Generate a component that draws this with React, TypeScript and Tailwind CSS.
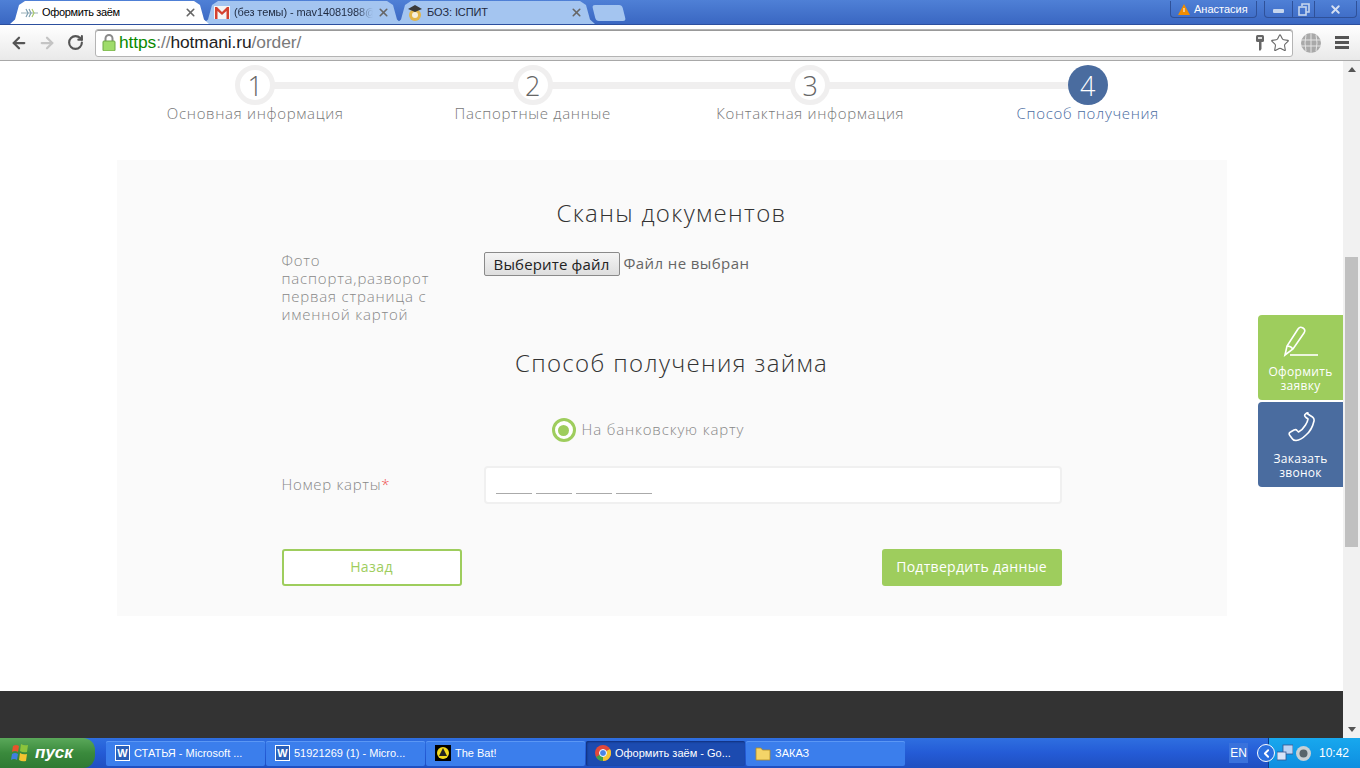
import { ArrowLeft, ArrowRight, RotateCw, Star, X, ChevronLeft } from 'lucide-react'

const ui = "font-['Liberation_Sans',sans-serif]"
const site = "font-['Open_Sans',sans-serif]"

const steps = ['Основная информация', 'Паспортные данные', 'Контактная информация', 'Способ получения']

function Favicon() {
  return (
    <svg width="17" height="10" viewBox="0 0 17 10" className="shrink-0">
      <path d="M0 5h17" stroke="#9ab0b8" strokeWidth="1.2" />
      <path d="M5 1l2 4-2 4M8 1l2 4-2 4" stroke="#7f9fb0" strokeWidth="1.2" fill="none" />
      <path d="M11 1l2 4-2 4" stroke="#a8c868" strokeWidth="1.2" fill="none" />
    </svg>
  )
}

function GmailIcon() {
  return (
    <svg width="16" height="13" viewBox="0 0 16 13" className="shrink-0">
      <rect width="16" height="13" fill="#f4f4f4" />
      <path d="M1 13V1h2l5 5 5-5h2v12h-2.500V5L8 9 3.500 5v8z" fill="#d4412f" />
    </svg>
  )
}

function GradIcon() {
  return (
    <svg width="16" height="18" viewBox="0 0 16 18" className="shrink-0">
      <circle cx="8" cy="11" r="6" fill="#e2b64a" />
      <circle cx="8" cy="11" r="3" fill="#f6efdc" />
      <path d="M1 5l7-4 7 4-7 3z" fill="#3a3a3a" />
    </svg>
  )
}

function Tab({ title, icon, active, faded }: { title: string; icon: React.ReactNode; active?: boolean; faded?: boolean }) {
  return (
    <div
      className={`-mr-[6px] flex h-full w-[199px] shrink-0 items-center gap-1 pl-[11px] pr-[12px] [clip-path:polygon(0_100%,5px_80%,9px_4px,15px_0,184px_0,190px_4px,194px_80%,199px_100%)] ${
        active ? 'z-10 bg-white text-black' : 'bg-[#a4c5f0] text-[#1f2a40]'
      }`}
    >
      {icon}
      <span className={`${ui} min-w-0 flex-1 overflow-hidden whitespace-nowrap text-[11px] ${active ? 'tracking-[-0.35px]' : 'tracking-[-0.1px]'} ${faded ? '[mask-image:linear-gradient(90deg,#000_88%,transparent)]' : ''}`}>
        {title}
      </span>
      <X size={13} strokeWidth={3} className="shrink-0 text-[#666]" />
    </div>
  )
}

function Chrome() {
  return (
    <div className="flex h-[61px] shrink-0 flex-col border-b border-[#a8a8a8]">
      <div className="flex h-[25px] shrink-0 border-b border-[#2c4f9e] bg-gradient-to-b from-[#4f80d6] to-[#3a67c2] pl-[10px] pt-[1px]">
        <Tab active title="Оформить заём" icon={<Favicon />} />
        <Tab faded title="(без темы) - mav14081988@" icon={<GmailIcon />} />
        <Tab title="БОЗ: ІСПИТ" icon={<GradIcon />} />
        <div className="ml-[5px] mt-[4px] h-[16px] w-[30px] skew-x-[14deg] rounded-[3px] bg-[#a4c5f0]" />
        <div className="ml-auto flex h-[17px] items-start pr-[3px]">
          <div className="flex h-[17px] w-[87px] items-center gap-[4px] rounded-b-[4px] border border-t-0 border-[#2f5199] pl-[7px]">
            <svg width="12" height="11" viewBox="0 0 12 11">
              <path d="M6 0l6 11H0z" fill="#f08c00" />
              <path d="M5.500 4h1v4h-1z" fill="#fff" />
            </svg>
            <span className={`${ui} text-[11px] text-white`}>Анастасия</span>
          </div>
          <div className="ml-[7px] flex h-[17px] w-[93px] rounded-b-[4px] border border-t-0 border-[#2f5199]">
            <div className="flex w-[28px] items-center justify-center border-r border-[#2f5199]">
              <div className="mt-[3px] h-[4px] w-[11px] rounded-[1px] bg-[#c6d6ee]" />
            </div>
            <div className="flex w-[22px] items-center justify-center border-r border-[#2f5199]">
              <svg width="12" height="13" viewBox="0 0 12 13" fill="none" stroke="#c6d6ee" strokeWidth="1.6">
                <path d="M4 3V1h7v8H8" />
                <rect x="1" y="4" width="7" height="8" />
              </svg>
            </div>
            <div className="flex flex-1 items-center justify-center">
              <X size={13} strokeWidth={3.5} className="text-[#d5e0f2]" />
            </div>
          </div>
        </div>
      </div>
      <div className="flex min-h-0 flex-1 items-center bg-gradient-to-b from-white to-[#e9e9e9] pl-[10px] pr-[10px]">
        <ArrowLeft size={18} strokeWidth={3} className="text-[#555]" />
        <ArrowRight size={18} strokeWidth={3} className="ml-[10px] text-[#c4c4c4]" />
        <RotateCw size={17} strokeWidth={3} className="ml-[11px] text-[#555]" />
        <div className="ml-[11px] flex h-[28px] w-[1198px] items-center rounded-[3px] border border-[#b4b4b4] bg-white pl-[6px] pr-[2px] shadow-[inset_0_1px_0_#999]">
          <svg width="14" height="17" viewBox="0 0 14 17" className="shrink-0">
            <path d="M3.500 8V4.500a3.500 3.500 0 0 1 7 0V8" fill="none" stroke="#8a8a8a" strokeWidth="2" />
            <rect x="1" y="7" width="12" height="10" rx="1" fill="#9fdc6a" stroke="#6fa845" />
          </svg>
          <span className={`${ui} ml-[3px] text-[17.4px] tracking-[-0.1px] text-[#7a7a7a]`}>
            <span className="text-[#0a8a00]">https</span>://<span className="text-[#222]">hotmani.ru</span>/order/
          </span>
          <svg width="10" height="16" viewBox="0 0 10 16" className="ml-auto shrink-0">
            <rect x="1" y="0" width="8" height="7" rx="1.500" fill="#666" />
            <rect x="3" y="2" width="4" height="2" fill="#ddd" />
            <path d="M4 7h2.500v7L5 16l-1-1z" fill="#666" />
          </svg>
          <Star size={20} strokeWidth={1.3} className="ml-[5px] text-[#666]" />
        </div>
        <svg width="20" height="20" viewBox="0 0 20 20" className="ml-[8px] shrink-0">
          <circle cx="10" cy="10" r="10" fill="#a9a9a9" />
          <path d="M0 7h20M0 13h20M10 0v20M5 2q-2 8 0 16M15 2q2 8 0 16" stroke="#e4e4e4" strokeWidth="1" fill="none" />
        </svg>
        <div className="ml-[14px] flex w-[14px] flex-col gap-[2px]">
          <div className="h-[3px] bg-[#555]" />
          <div className="h-[3px] bg-[#555]" />
          <div className="h-[3px] bg-[#555]" />
        </div>
      </div>
    </div>
  )
}

function Stepper() {
  return (
    <div className="relative mx-auto grid w-[1110px] grid-cols-4">
      <div className="absolute left-[139px] right-[139px] top-[17px] h-[7px] bg-[#f0efef]" />
      {steps.map((s, i) => (
        <div key={s} className="relative flex flex-col items-center">
          <div
            className={`flex h-10 w-10 items-center justify-center rounded-full text-[27px] font-light leading-none ${site} ${
              i === 3 ? 'bg-[#4a6c9f] text-white' : 'border-[5px] border-[#f0efef] bg-white text-[#666]'
            }`}
          >
            {i + 1}
          </div>
          <div className={`${site} mt-[-2px] text-[15px] font-light leading-[20px] tracking-[0.68px] ${i === 3 ? 'text-[#4a6c9f]' : 'text-[#777]'}`}>{s}</div>
        </div>
      ))}
    </div>
  )
}

function Form() {
  return (
    <div className={`${site} mx-auto mt-[37px] w-[1110px] bg-[#fafafa] pb-[30px] pt-[39px]`}>
      <h2 className="pb-[2px] text-center text-[24px] font-light leading-[28px] tracking-[1.35px] text-[#333]">Сканы документов</h2>
      <div className="mx-auto w-[780px]">
        <div className="mt-[23px] flex">
          <div className="-mt-[1px] w-[160px] text-[15px] font-light leading-[18px] tracking-[0.8px] text-[#888]">
            Фото паспорта,разворот первая страница с именной картой
          </div>
          <div className="ml-[42px] flex h-[24px] items-center text-[15px] tracking-[0.4px] text-[#666]">
            <button className="h-[24px] w-[136px] rounded-[2px] border border-[#8a8a8a] bg-gradient-to-b from-[#f4f4f4] to-[#dedede] pb-[2px] text-[15px] tracking-[0.15px] text-[#222]">
              Выберите файл
            </button>
            <span className="ml-[4px] -mt-[2px]">Файл не выбран</span>
          </div>
        </div>
        <h2 className="mt-[26px] pb-[2px] text-center text-[24px] font-light leading-[28px] tracking-[1.35px] text-[#333]">Способ получения займа</h2>
        <div className="ml-[270px] mt-[39px] flex items-center">
          <div className="flex h-6 w-6 items-center justify-center rounded-full border-[3px] border-[#9ecd5d] bg-white">
            <div className="h-[11px] w-[11px] rounded-full bg-[#9ecd5d]" />
          </div>
          <span className="-mt-[2px] ml-[6px] text-[15px] font-light tracking-[0.85px] text-[#888]">На банковскую карту</span>
        </div>
        <div className="mt-[24px] flex items-center">
          <div className="-mt-[2px] w-[202px] text-[15px] font-light tracking-[0.7px] text-[#888]">
            Номер карты<span className="text-[#f05050]">*</span>
          </div>
          <div className="flex h-[38px] flex-1 items-end gap-[4px] rounded-[4px] border-2 border-[#f0f0f0] bg-white pb-[8px] pl-[10px]">
            <div className="h-px w-9 bg-[#aaa]" />
            <div className="h-px w-9 bg-[#aaa]" />
            <div className="h-px w-9 bg-[#aaa]" />
            <div className="h-px w-9 bg-[#aaa]" />
          </div>
        </div>
        <div className="mt-[45px] flex justify-between">
          <button className="h-[37px] w-[180px] rounded-[3px] border-2 border-[#9ecd5d] bg-white pb-[2px] text-[14px] tracking-[0.4px] text-[#9ecd5d]">Назад</button>
          <button className="h-[37px] w-[180px] rounded-[3px] bg-[#9ecd5d] pb-[2px] text-[14px] tracking-[0.3px] text-white">Подтвердить данные</button>
        </div>
      </div>
    </div>
  )
}

function FloatButtons() {
  return (
    <div className={`${site} absolute right-0 top-[254px] flex w-[85px] flex-col gap-[2px] text-center text-[12px] leading-[14px] tracking-[0.3px] text-white`}>
      <div className="flex h-[85px] flex-col items-center rounded-l-[4px] bg-[#9ecd5d] pt-[10px]">
        <svg width="36" height="32" viewBox="0 0 36 32" fill="none" stroke="#fff" strokeWidth="1.6">
          <path d="M2 30l2-9L15 4q2-3 5-1t1 5L10 24z" />
          <path d="M4 21q4 0 6 3" />
          <path d="M7 30h28" />
        </svg>
        <div className="mt-[8px]">Оформить<br />заявку</div>
      </div>
      <div className="flex h-[85px] flex-col items-center rounded-l-[4px] bg-[#4a6c9f] pt-[10px]">
        <svg width="30" height="30" viewBox="0 0 30 30" fill="none" stroke="#fff" strokeWidth="1.6" strokeLinejoin="round">
          <path d="M21 1.500l5.500 3.500q2 1.500 1.500 4-2 9-8 14-5 5-10 5.500-2.500 0-3.500-1.500l-3-4q-1-2 1-3l3.500-2q2-1 3 .5l1.500 1.500q4-2 7-7 2-3 2.500-6l-2-1.500q-2-1.500-1-3l1-1q1-1 2-.5z" />
        </svg>
        <div className="mt-[10px]">Заказать<br />звонок</div>
      </div>
    </div>
  )
}

function Scrollbar() {
  return (
    <div className="flex w-[17px] shrink-0 flex-col items-center bg-[#f1f1f1]">
      <div className="mt-[6px] h-0 w-0 border-x-[4px] border-b-[5px] border-x-transparent border-b-[#555]" />
      <div className="mt-[185px] h-[290px] w-[13px] bg-[#c0c0c0]" />
      <div className="mt-auto mb-[6px] h-0 w-0 border-x-[4px] border-t-[5px] border-x-transparent border-t-[#555]" />
    </div>
  )
}

function WordIcon() {
  return (
    <div className="flex h-[16px] w-[15px] shrink-0 items-center justify-center border border-white bg-[#2a5fb8] text-[11px] font-bold leading-none text-white">W</div>
  )
}

function TaskButton({ label, icon, active }: { label: string; icon: React.ReactNode; active?: boolean }) {
  return (
    <div
      className={`flex h-[25px] w-[159px] shrink-0 items-center gap-[4px] overflow-hidden rounded-[2px] pl-[9px] text-[11px] text-white ${
        active ? 'bg-[#1c4bb0] shadow-[inset_1px_1px_2px_#0f2f7a]' : 'bg-[#3b7eec] shadow-[inset_0_1px_0_#5b97f4]'
      }`}
    >
      {icon}
      <span className="whitespace-nowrap">{label}</span>
    </div>
  )
}

function Taskbar() {
  return (
    <div className={`${ui} flex h-[30px] shrink-0 items-center bg-gradient-to-b from-[#2f6fe0] via-[#245bd6] to-[#1f4fc0]`}>
      <div className="flex h-full w-[95px] shrink-0 items-center gap-[5px] rounded-r-[12px] bg-gradient-to-b from-[#5aa85a] via-[#3a8a3c] to-[#2f7a33] pl-[10px]">
        <svg width="20" height="20" viewBox="0 0 20 20" className="shrink-0">
          <path d="M3 3q3-2 6 0l-1 6q-3-2-6 0z" fill="#e8542c" />
          <path d="M11 1q3 2 7 1l-1 7q-4 1-7-1z" fill="#8cc43c" />
          <path d="M2 11q3-2 6 0l-1 6q-3-2-6 0z" fill="#3f7fe0" />
          <path d="M10 10q3 2 7 1l-1 7q-4 1-7-1z" fill="#f4c430" />
        </svg>
        <span className="text-[17px] font-bold italic text-white">пуск</span>
      </div>
      <div className="ml-[11px] flex gap-[1px]">
        <TaskButton label="СТАТЬЯ - Microsoft ..." icon={<WordIcon />} />
        <TaskButton label="51921269 (1) - Micro..." icon={<WordIcon />} />
        <TaskButton
          label="The Bat!"
          icon={
            <svg width="16" height="16" viewBox="0 0 16 16" className="shrink-0">
              <rect width="16" height="16" fill="#000" />
              <circle cx="8" cy="8" r="6" fill="#f2d91c" />
              <path d="M8 3l4 8H4z" fill="#222" />
            </svg>
          }
        />
        <TaskButton
          active
          label="Оформить заём - Go..."
          icon={
            <svg width="16" height="16" viewBox="0 0 16 16" className="shrink-0">
              <circle cx="8" cy="8" r="8" fill="#e0483a" />
              <path d="M8 8L1 12a8 8 0 0 0 7 4z" fill="#3fa24a" />
              <path d="M8 8v8a8 8 0 0 0 7-12z" fill="#f5c533" />
              <circle cx="8" cy="8" r="3.500" fill="#4a84e8" stroke="#fff" />
            </svg>
          }
        />
        <TaskButton
          label="ЗАКАЗ"
          icon={
            <svg width="16" height="15" viewBox="0 0 16 15" className="shrink-0">
              <path d="M1 2h5l1.500 2H15v10H1z" fill="#f4d468" stroke="#b08a28" strokeWidth="0.8" />
            </svg>
          }
        />
      </div>
      <div className="ml-auto mr-[20px] bg-[#3a72dc] px-[1px] py-[3px] text-[12px] leading-[14px] text-white">EN</div>
      <div className="relative flex h-full w-[92px] items-center bg-gradient-to-b from-[#18a8ee] to-[#0f8ee0] pl-[9px] shadow-[inset_1px_0_0_#0a3c8c]">
        <div className="absolute -left-[11px] flex h-[18px] w-[18px] items-center justify-center rounded-full border border-white bg-[#2a70e0]">
          <ChevronLeft size={13} strokeWidth={3.5} className="text-white" />
        </div>
        <svg width="16" height="18" viewBox="0 0 16 18" className="shrink-0">
          <rect x="6" y="1" width="10" height="9" fill="#bcd4f4" stroke="#34558f" strokeWidth="0.8" />
          <rect x="0" y="8" width="9" height="8" fill="#d8e4f8" stroke="#34558f" strokeWidth="0.8" />
        </svg>
        <svg width="15" height="15" viewBox="0 0 15 15" className="ml-[3px] shrink-0">
          <circle cx="7.500" cy="7.500" r="7.500" fill="#c8d0d4" />
          <circle cx="7.500" cy="7.500" r="4" fill="#58646a" />
        </svg>
        <span className="ml-[8px] text-[12px] text-white">10:42</span>
      </div>
    </div>
  )
}

export default function App() {
  return (
    <div className="flex h-screen w-full flex-col overflow-hidden bg-white">
      <Chrome />
      <div className="flex min-h-0 flex-1">
        <div className="relative flex min-w-0 flex-1 flex-col pt-1">
          <Stepper />
          <Form />
          <div className="mt-[75px] flex-1 bg-[#333]" />
          <FloatButtons />
        </div>
        <Scrollbar />
      </div>
      <Taskbar />
    </div>
  )
}
